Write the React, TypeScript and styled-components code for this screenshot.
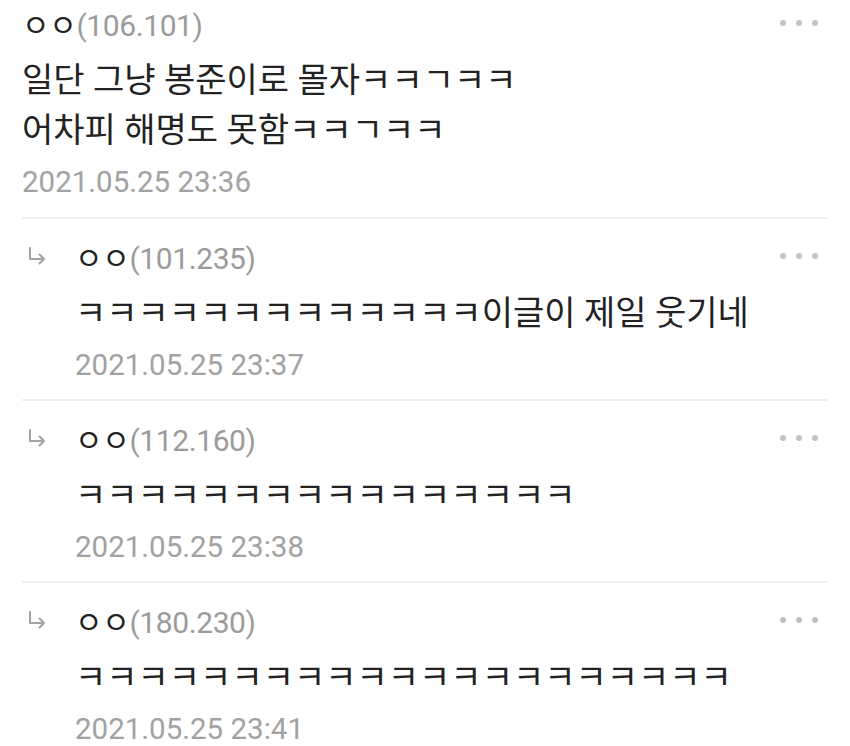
import React from "react";
import styled, { createGlobalStyle } from "styled-components";

const GlobalStyle = createGlobalStyle`
  html, body {
    margin: 0;
    padding: 0;
    background: #ffffff;
  }
  body {
    font-family: Roboto, "Noto Sans CJK KR", "Noto Sans", sans-serif;
    -webkit-font-smoothing: antialiased;
  }
`;

const List = styled.div`
  width: 850px;
  padding: 0 22px;
  box-sizing: border-box;
`;

const Item = styled.div<{ $reply?: boolean; $last?: boolean }>`
  display: flex;
  padding: ${(p) => (p.$reply ? "17px 0 7px" : "3px 0 8px")};
  border-bottom: ${(p) => (p.$last ? "none" : "2px solid #efefef")};
`;

const ArrowCol = styled.div`
  width: 53px;
  flex-shrink: 0;
  height: 40px;
  display: flex;
  align-items: center;
  padding-left: 5px;
  box-sizing: border-box;
`;

const Content = styled.div`
  flex: 1;
  min-width: 0;
`;

const Header = styled.div`
  height: 40px;
  display: flex;
  align-items: center;
  justify-content: space-between;
  padding-right: 10px;
`;

const Name = styled.span`
  font-size: 30px;
  color: #222;
  letter-spacing: -0.4px;
`;

const Ip = styled.span`
  color: #9b9b9b;
`;

const Dots = styled.div`
  display: flex;
  gap: 10px;
`;

const Dot = styled.span`
  width: 6px;
  height: 6px;
  border-radius: 50%;
  background: #c2c2c2;
`;

const Body = styled.div`
  margin-top: 12px;
  font-size: 34px;
  line-height: 50px;
  color: #222;
`;

const Date = styled.div`
  font-size: 29.5px;
  line-height: 54px;
  color: #a2a2a2;
`;

const ReplyArrow = () => (
  <svg width="20" height="20" viewBox="0 0 20 20" fill="none">
    <path
      d="M3 2 V13 H17 M12.5 8.5 L17 13 L12.5 17.5"
      stroke="#a3a3a3"
      strokeWidth="2"
      strokeLinecap="round"
      strokeLinejoin="round"
    />
  </svg>
);

type Comment = {
  ip: string;
  lines: string[];
  date: string;
  reply?: boolean;
};

const comments: Comment[] = [
  {
    ip: "106.101",
    lines: ["일단 그냥 봉준이로 몰자ㅋㅋㄱㅋㅋ", "어차피 해명도 못함ㅋㅋㄱㅋㅋ"],
    date: "2021.05.25 23:36",
  },
  {
    ip: "101.235",
    lines: ["ㅋㅋㅋㅋㅋㅋㅋㅋㅋㅋㅋㅋㅋ이글이 제일 웃기네"],
    date: "2021.05.25 23:37",
    reply: true,
  },
  {
    ip: "112.160",
    lines: ["ㅋㅋㅋㅋㅋㅋㅋㅋㅋㅋㅋㅋㅋㅋㅋㅋ"],
    date: "2021.05.25 23:38",
    reply: true,
  },
  {
    ip: "180.230",
    lines: ["ㅋㅋㅋㅋㅋㅋㅋㅋㅋㅋㅋㅋㅋㅋㅋㅋㅋㅋㅋㅋㅋ"],
    date: "2021.05.25 23:41",
    reply: true,
  },
];

export default function App() {
  return (
    <>
      <GlobalStyle />
      <List>
        {comments.map((c, i) => (
          <Item key={i} $reply={c.reply} $last={i === comments.length - 1}>
            {c.reply && (
              <ArrowCol>
                <ReplyArrow />
              </ArrowCol>
            )}
            <Content>
              <Header>
                <Name>
                  ㅇㅇ<Ip>({c.ip})</Ip>
                </Name>
                <Dots>
                  <Dot />
                  <Dot />
                  <Dot />
                </Dots>
              </Header>
              <Body>
                {c.lines.map((l, j) => (
                  <div key={j}>{l}</div>
                ))}
              </Body>
              <Date>{c.date}</Date>
            </Content>
          </Item>
        ))}
      </List>
    </>
  );
}
